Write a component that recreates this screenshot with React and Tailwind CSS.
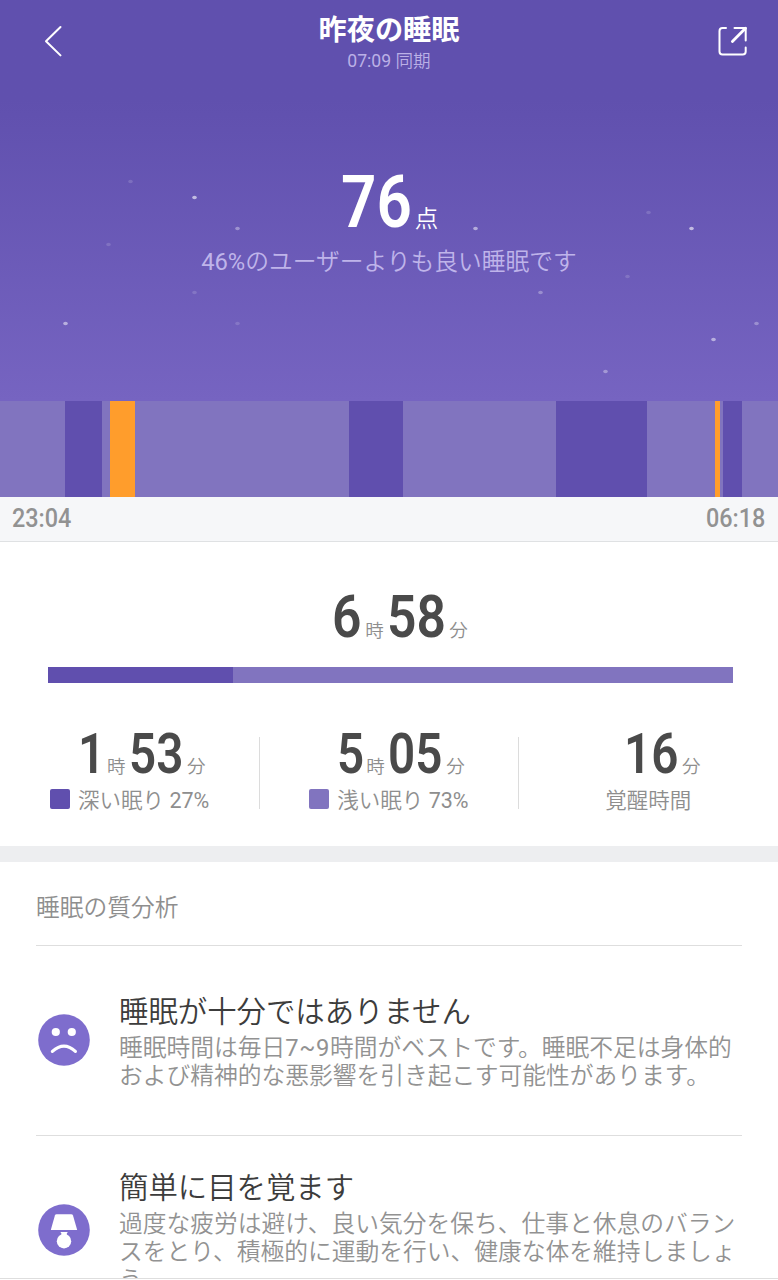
const STAGES = [
    { type: 'light', width: 65 },
    { type: 'deep', width: 37 },
    { type: 'light', width: 7.5 },
    { type: 'awake', width: 25.5 },
    { type: 'light', width: 213.5 },
    { type: 'deep', width: 54.5 },
    { type: 'light', width: 152.5 },
    { type: 'deep', width: 91.5 },
    { type: 'light', width: 68 },
    { type: 'awake', width: 4.5 },
    { type: 'light', width: 3.5 },
    { type: 'deep', width: 19 },
    { type: 'light', width: 36 },
];

const STAGE_COLORS = {
    light: 'bg-[#8174bf]',
    deep: 'bg-[#604fae]',
    awake: 'bg-[#ff9d2c]',
};

const STARS = [
    [130, 181, 0.15], [194, 197, 0.6], [237, 228, 0.35], [108, 244, 0.15],
    [475, 228, 0.5], [648, 212, 0.15], [691, 228, 0.6], [627, 276, 0.15],
    [540, 292, 0.3], [194, 292, 0.15], [65, 323, 0.5], [237, 323, 0.15],
    [756, 323, 0.3], [713, 339, 0.5], [605, 371, 0.35],
];

function Stars() {
    return (
        <svg className="absolute inset-0" width="778" height="401" viewBox="0 0 778 401" fill="#fff">
            {STARS.map(([x, y, opacity]) => (
                <ellipse key={`${x}-${y}`} cx={x + 0.5} cy={y + 0.5} rx="2.3" ry="1.7" opacity={opacity} />
            ))}
        </svg>
    );
}

function SadIcon() {
    return (
        <svg width="52" height="52" viewBox="0 0 52 52">
            <circle cx="26" cy="26" r="25.8" fill="#7e6dcd" />
            <circle cx="17.8" cy="18" r="4.1" fill="#fff" />
            <circle cx="33.8" cy="18" r="4.1" fill="#fff" />
            <path d="M14.4 37.4Q26 27 37.4 37.4" fill="none" stroke="#fff" strokeWidth="3.2" strokeLinecap="round" />
        </svg>
    );
}

function LampIcon() {
    return (
        <svg width="52" height="52" viewBox="0 0 52 52">
            <circle cx="26" cy="26" r="25.8" fill="#7e6dcd" />
            <path d="M18.6 10.3H33.2Q34.6 10.3 35 11.6L39.2 25.9H12.8L16.9 11.6Q17.3 10.3 18.6 10.3Z" fill="#fff" />
            <path d="M22.4 28H29.8L28.8 29.5V33H23.4V29.5Z" fill="#fff" />
            <circle cx="26" cy="37.2" r="7.2" fill="#fff" />
        </svg>
    );
}

function Header() {
    return (
        <header className="relative flex h-20 items-start justify-between px-[30px]">
            <button type="button" className="pt-[15px] pl-[5px]">
                <svg width="27" height="52" viewBox="0 0 27 52" fill="none" stroke="#fff" strokeWidth="2" strokeLinecap="round" strokeLinejoin="round">
                    <path d="M25.5 12L11 26.2L25.5 40.4" />
                </svg>
            </button>
            <div className="flex flex-col items-center pt-[10px]">
                <h1 className="text-[28.2px] leading-[41px] font-bold text-white">昨夜の睡眠</h1>
                <p className="text-[17.6px] leading-[20px] text-[#bbb0e6]"><span className="font-normal">07:09</span> 同期</p>
            </div>
            <button type="button" className="pt-[25px]">
                <svg width="32" height="32" viewBox="0 0 32 32" fill="none" stroke="#fff" strokeWidth="2" strokeLinecap="round" strokeLinejoin="round">
                    <path d="M10 3H6.5Q3.5 3 3.5 6V26.5Q3.5 29.5 6.5 29.5H26.7Q29.7 29.5 29.7 26.5V22.5" />
                    <path d="M18.5 3H29.7V15.5" />
                    <path d="M29.5 3.2L16.4 16.6" strokeWidth="2.8" />
                </svg>
            </button>
        </header>
    );
}

function Duration({ hours, minutes }) {
    return (
        <div className="flex h-[54px] items-end">
            {hours && (
                <>
                    <span className="w-[29px] origin-left scale-x-[0.85] font-[Roboto] text-[56px] leading-[54px] font-semibold text-[#4a4a4a]">{hours}</span>
                    <span className="w-[22px] text-[18.5px] leading-[27px]">時</span>
                </>
            )}
            <span className="w-[58px] origin-left scale-x-[0.85] font-[Roboto] text-[56px] leading-[54px] font-semibold text-[#4a4a4a]">{minutes}</span>
            <span className="text-[18.5px] leading-[27px]">分</span>
        </div>
    );
}

function StatLabel({ color, name, percent }) {
    return (
        <div className="mt-[6px] flex items-center gap-2 text-[21.5px] leading-[27px] whitespace-nowrap">
            {color && <span className={`-mt-[3px] size-5 rounded-[2px] ${color}`}></span>}
            <span>
                {name}
                {percent && <span className="font-normal"> {percent}</span>}
            </span>
        </div>
    );
}

function AnalysisItem({ icon, title, children }) {
    return (
        <article className="flex h-[190px] shrink-0 items-center border-t border-[#dedede] pl-[2px]">
            <div className="-mt-px w-[81px]">{icon}</div>
            <div>
                <h3 className="text-[29.4px] leading-[43px] text-[#3c3c3c]">{title}</h3>
                <div className="pb-px text-[23.75px] leading-[28px] whitespace-nowrap text-[#929292]">{children}</div>
            </div>
        </article>
    );
}

export default function App() {
    return (
        <main
            lang="ja"
            className="flex h-[1280px] w-[778px] flex-col overflow-hidden bg-white font-[Roboto,'Noto_Sans_CJK_JP',sans-serif] font-[350] text-[#8e8e8e]"
        >
            <section className="relative h-[401px] shrink-0 bg-linear-to-b from-[#6050ae] from-25% to-[#7664c1]">
                <Stars />
                <Header />
                <div className="relative flex flex-col items-center pt-[86px]">
                    <div className="flex h-[72px] items-end pl-[1px] text-white">
                        <span className="w-[74px] origin-left scale-x-[0.85] font-[Roboto] text-[73px] leading-[72px] font-semibold">76</span>
                        <span className="text-[23.5px] leading-[38px]">点</span>
                    </div>
                    <p className="mt-[6px] text-[23.75px] leading-[36px] text-[#bfb4ea]"><span className="font-normal">46%</span>のユーザーよりも良い睡眠です</p>
                </div>
            </section>

            <div className="flex h-[95.5px] shrink-0">
                {STAGES.map((stage, idx) => (
                    <div key={idx} className={STAGE_COLORS[stage.type]} style={{ width: stage.width }}></div>
                ))}
            </div>
            <div className="flex h-[45.5px] shrink-0 items-center justify-between border-b border-[#dfe1e3] bg-[#f6f7f9] px-3 font-[Roboto] text-[26px] font-medium text-[#929292]">
                <span className="w-[60px] origin-left scale-x-[0.9]">23:04</span>
                <span className="w-[60px] origin-left scale-x-[0.9]">06:18</span>
            </div>

            <section className="flex h-[304px] shrink-0 flex-col">
                <div className="mt-[47px] flex h-[56px] items-end justify-center pl-[22px]">
                    <span className="w-[33px] origin-left scale-x-[0.86] font-[Roboto] text-[60px] leading-[56px] font-semibold text-[#4a4a4a]">6</span>
                    <span className="w-[22px] text-[18.5px] leading-[27px]">時</span>
                    <span className="w-[62px] origin-left scale-x-[0.86] font-[Roboto] text-[60px] leading-[56px] font-semibold text-[#4a4a4a]">58</span>
                    <span className="text-[18.5px] leading-[27px]">分</span>
                </div>
                <div className="mt-[22px] mr-[45px] ml-[47.5px] flex h-4">
                    <div className="w-[27%] bg-[#604fae]"></div>
                    <div className="flex-1 bg-[#8174bf]"></div>
                </div>
                <div className="mt-[44px] grid grid-cols-3">
                    <div className="flex flex-col items-center">
                        <div className="pl-6"><Duration hours="1" minutes="53" /></div>
                        <StatLabel color="bg-[#604fae]" name="深い眠り" percent="27%" />
                    </div>
                    <div className="mt-[10px] h-[72px] border-x border-[#dcdcdc]">
                        <div className="-mt-[10px] flex flex-col items-center">
                            <div className="pl-6"><Duration hours="5" minutes="05" /></div>
                            <StatLabel color="bg-[#8174bf]" name="浅い眠り" percent="73%" />
                        </div>
                    </div>
                    <div className="flex flex-col items-center">
                        <div className="pl-7"><Duration minutes="16" /></div>
                        <StatLabel name="覚醒時間" />
                    </div>
                </div>
            </section>

            <div className="h-4 shrink-0 bg-[#edeef0]"></div>

            <section className="flex h-[417px] shrink-0 flex-col overflow-hidden border-b border-[#dedede] px-9">
                <h2 className="h-[83px] shrink-0 pt-[29px] text-[23.75px] leading-[34px]">睡眠の質分析</h2>
                <AnalysisItem icon={<SadIcon />} title="睡眠が十分ではありません">
                    <p>睡眠時間は毎日<span className="font-normal tracking-[0.6px]">7~9</span>時間がベストです。睡眠不足は身体的</p>
                    <p>および精神的な悪影響を引き起こす可能性があります。</p>
                </AnalysisItem>
                <AnalysisItem icon={<LampIcon />} title="簡単に目を覚ます">
                    <p>過度な疲労は避け、良い気分を保ち、仕事と休息のバラン</p>
                    <p>スをとり、積極的に運動を行い、健康な体を維持しましょ</p>
                    <p>う。</p>
                </AnalysisItem>
            </section>
        </main>
    );
}
